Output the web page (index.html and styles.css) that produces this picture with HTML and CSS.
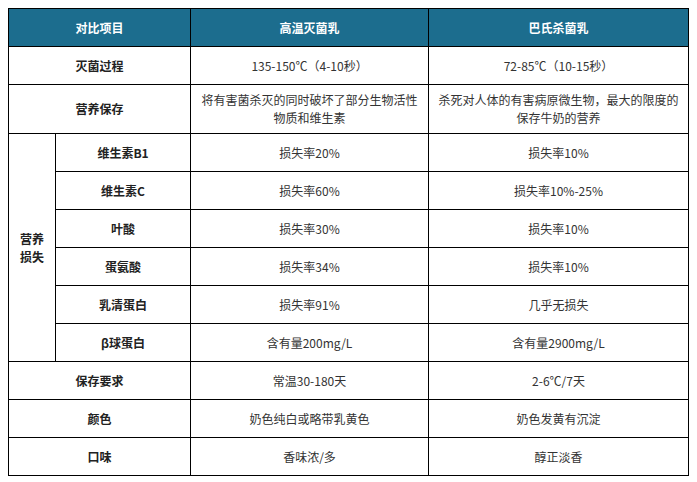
FILE: index.html
```html
<!DOCTYPE html>
<html lang="zh-CN">
<head>
<meta charset="utf-8">
<title>高温灭菌乳与巴氏杀菌乳对比</title>
<link rel="stylesheet" href="styles.css">
</head>
<body>
<table class="cmp">
  <colgroup>
    <col class="c-a">
    <col class="c-b">
    <col class="c-c">
    <col class="c-d">
  </colgroup>
  <thead>
    <tr class="row">
      <th colspan="2">对比项目</th>
      <th>高温灭菌乳</th>
      <th>巴氏杀菌乳</th>
    </tr>
  </thead>
  <tbody>
    <tr class="row">
      <td class="label" colspan="2">灭菌过程</td>
      <td>135-150℃（4-10秒）</td>
      <td>72-85℃（10-15秒）</td>
    </tr>
    <tr class="row tall">
      <td class="label" colspan="2">营养保存</td>
      <td>将有害菌杀灭的同时破坏了部分生物活性物质和维生素</td>
      <td>杀死对人体的有害病原微生物，最大的限度的保存牛奶的营养</td>
    </tr>
    <tr class="row">
      <td class="label group" rowspan="6">营养<br>损失</td>
      <td class="label">维生素B1</td>
      <td>损失率20%</td>
      <td>损失率10%</td>
    </tr>
    <tr class="row">
      <td class="label">维生素C</td>
      <td>损失率60%</td>
      <td>损失率10%-25%</td>
    </tr>
    <tr class="row">
      <td class="label">叶酸</td>
      <td>损失率30%</td>
      <td>损失率10%</td>
    </tr>
    <tr class="row">
      <td class="label">蛋氨酸</td>
      <td>损失率34%</td>
      <td>损失率10%</td>
    </tr>
    <tr class="row">
      <td class="label">乳清蛋白</td>
      <td>损失率91%</td>
      <td>几乎无损失</td>
    </tr>
    <tr class="row">
      <td class="label">β球蛋白</td>
      <td>含有量200mg/L</td>
      <td>含有量2900mg/L</td>
    </tr>
    <tr class="row">
      <td class="label" colspan="2">保存要求</td>
      <td>常温30-180天</td>
      <td>2-6℃/7天</td>
    </tr>
    <tr class="row">
      <td class="label" colspan="2">颜色</td>
      <td>奶色纯白或略带乳黄色</td>
      <td>奶色发黄有沉淀</td>
    </tr>
    <tr class="row">
      <td class="label" colspan="2">口味</td>
      <td>香味浓/多</td>
      <td>醇正淡香</td>
    </tr>
  </tbody>
</table>
</body>
</html>
```

FILE: styles.css
```css
html, body {
  margin: 0;
  padding: 0;
  background: #ffffff;
}

body {
  padding: 8px 0 0 8px;
  font-family: "Noto Sans CJK SC", "Noto Sans", sans-serif;
  font-size: 12px;
  color: #333333;
}

.cmp {
  border-collapse: collapse;
  table-layout: fixed;
  width: 680px;
}

.c-a { width: 47px; }
.c-b { width: 135px; }
.c-c { width: 238px; }
.c-d { width: 260px; }

.cmp th,
.cmp td {
  border: 1px solid #000000;
  text-align: center;
  vertical-align: middle;
  padding: 0 8px;
  line-height: 18px;
}

.row {
  height: 38px;
}

.row.tall {
  height: 49px;
}

.cmp th {
  background: #1c6d8e;
  color: #ffffff;
  font-weight: bold;
  font-size: 12px;
}

.label {
  font-weight: bold;
  color: #222222;
}

.group {
  padding: 0;
}
```
